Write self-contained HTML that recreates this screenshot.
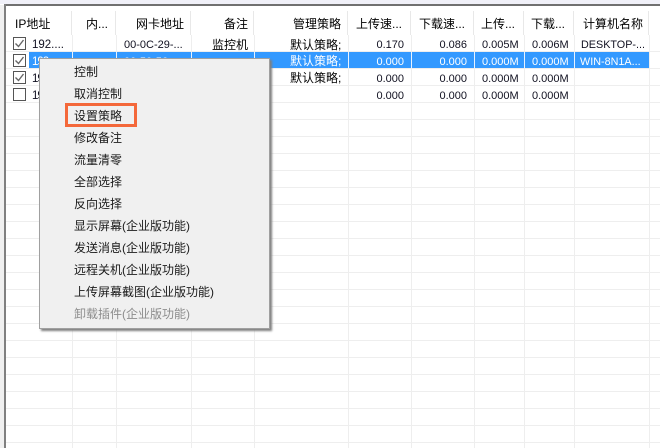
<!DOCTYPE html>
<html><head><meta charset="utf-8">
<style>
html,body{margin:0;padding:0;width:660px;height:448px;overflow:hidden;background:#fff}
body{position:relative;font-family:"Liberation Sans","Noto Sans CJK SC",sans-serif;font-size:12px;color:#000}
div,span.t{position:absolute}
.t{white-space:nowrap;line-height:17px;height:17px}
.h{top:16px}
.r{text-align:right}
.hl{left:6px;width:654px;height:1px;background:#eeeeee}
.vl{top:35px;width:1px;height:413px;background:#eeeeee}
.hs{top:11px;width:1px;height:24px;background:#e8e8e8}
.cb{left:13px;width:11px;height:11px;border:1px solid #555;background:#fff}
.cb svg{position:absolute;left:0;top:0}
.n{font-size:11px;color:#101020}
.m{position:absolute;left:74px;line-height:22px;height:22px;white-space:nowrap;color:#1a1a1a}
</style></head><body>
<div style="left:0;top:0;width:660px;height:4px;background:#f0f0f8"></div>
<div style="left:0;top:5px;width:4px;height:443px;background:#f0f0f0"></div>
<div style="left:4px;top:4px;width:656px;height:2px;background:#707070"></div>
<div style="left:4px;top:4px;width:2px;height:444px;background:#808080"></div>
<div style="left:6px;top:6px;width:654px;height:5px;background:#fff"></div>

<div class="hl" style="top:51px"></div><div class="hl" style="top:68px"></div><div class="hl" style="top:85px"></div><div class="hl" style="top:102px"></div><div class="hl" style="top:119px"></div><div class="hl" style="top:136px"></div><div class="hl" style="top:153px"></div><div class="hl" style="top:170px"></div><div class="hl" style="top:187px"></div><div class="hl" style="top:204px"></div><div class="hl" style="top:221px"></div><div class="hl" style="top:238px"></div><div class="hl" style="top:255px"></div><div class="hl" style="top:272px"></div><div class="hl" style="top:289px"></div><div class="hl" style="top:306px"></div><div class="hl" style="top:323px"></div><div class="hl" style="top:340px"></div><div class="hl" style="top:357px"></div><div class="hl" style="top:374px"></div><div class="hl" style="top:391px"></div><div class="hl" style="top:408px"></div><div class="hl" style="top:425px"></div><div class="hl" style="top:442px"></div>
<div class="vl" style="left:72px"></div><div class="vl" style="left:116px"></div><div class="vl" style="left:191px"></div><div class="vl" style="left:254px"></div><div class="vl" style="left:348px"></div><div class="vl" style="left:411px"></div><div class="vl" style="left:474px"></div><div class="vl" style="left:524px"></div><div class="vl" style="left:574px"></div><div class="vl" style="left:649px"></div>

<div style="left:6px;top:11px;width:654px;height:24px;background:#fff"></div>
<div class="hs" style="left:71px"></div><div class="hs" style="left:115px"></div><div class="hs" style="left:190px"></div><div class="hs" style="left:253px"></div><div class="hs" style="left:347px"></div><div class="hs" style="left:410px"></div><div class="hs" style="left:473px"></div><div class="hs" style="left:523px"></div><div class="hs" style="left:573px"></div><div class="hs" style="left:648px"></div>

<span class="t h" style="left:15px">IP地址</span>
<span class="t h" style="left:86px">内...</span>
<span class="t h" style="left:136px">网卡地址</span>
<span class="t h" style="left:224px">备注</span>
<span class="t h" style="left:293px">管理策略</span>
<span class="t h" style="left:356px">上传速...</span>
<span class="t h" style="left:419px">下载速...</span>
<span class="t h" style="left:481px">上传...</span>
<span class="t h" style="left:531px">下载...</span>
<span class="t h" style="left:583px">计算机名称</span>

<div style="left:29px;top:52px;width:620px;height:16px;background:#3399ff"></div>
<div style="left:72px;top:52px;width:1px;height:16px;background:#e8f2ff"></div><div style="left:116px;top:52px;width:1px;height:16px;background:#e8f2ff"></div><div style="left:191px;top:52px;width:1px;height:16px;background:#e8f2ff"></div><div style="left:254px;top:52px;width:1px;height:16px;background:#e8f2ff"></div><div style="left:348px;top:52px;width:1px;height:16px;background:#e8f2ff"></div><div style="left:411px;top:52px;width:1px;height:16px;background:#e8f2ff"></div><div style="left:474px;top:52px;width:1px;height:16px;background:#e8f2ff"></div><div style="left:524px;top:52px;width:1px;height:16px;background:#e8f2ff"></div><div style="left:574px;top:52px;width:1px;height:16px;background:#e8f2ff"></div>

<div class="cb" style="top:37px"><svg width="11" height="11"><path d="M1.5 5.5L4.5 8.5L9.5 2" fill="none" stroke="#666" stroke-width="1.4"/></svg></div>
<div class="cb" style="top:54px"><svg width="11" height="11"><path d="M1.5 5.5L4.5 8.5L9.5 2" fill="none" stroke="#666" stroke-width="1.4"/></svg></div>
<div class="cb" style="top:71px"><svg width="11" height="11"><path d="M1.5 5.5L4.5 8.5L9.5 2" fill="none" stroke="#666" stroke-width="1.4"/></svg></div>
<div class="cb" style="top:88px"></div>

<span class="t n" style="left:32px;top:37px;font-size:11.5px">192....</span>
<span class="t n" style="left:32px;top:54px;color:#fff;letter-spacing:-1px;font-size:11.5px">192</span>
<span class="t n" style="left:32px;top:71px;letter-spacing:-1px;font-size:11.5px">192</span>
<span class="t n" style="left:32px;top:88px;letter-spacing:-1px;font-size:11.5px">192</span>
<span class="t n" style="left:124px;top:37px">00-0C-29-...</span>
<span class="t n" style="left:124px;top:54px;color:#fff">00-50-56-...</span>
<span class="t" style="left:212px;top:37px">监控机</span>
<span class="t" style="left:290px;top:37px">默认策略;</span>
<span class="t" style="left:290px;top:53px;color:#fff">默认策略;</span>
<span class="t" style="left:290px;top:70px">默认策略;</span>

<span class="t n r" style="left:340px;width:64px;top:37px">0.170</span>
<span class="t n r" style="left:403px;width:64px;top:37px">0.086</span>
<span class="t n" style="left:482px;top:37px">0.005M</span>
<span class="t n" style="left:532px;top:37px">0.006M</span>
<span class="t n" style="left:581px;top:37px;font-size:10.8px">DESKTOP-...</span>

<span class="t n r" style="left:340px;width:64px;top:54px;color:#fff">0.000</span>
<span class="t n r" style="left:403px;width:64px;top:54px;color:#fff">0.000</span>
<span class="t n" style="left:482px;top:54px;color:#fff">0.000M</span>
<span class="t n" style="left:532px;top:54px;color:#fff">0.000M</span>
<span class="t n" style="left:580px;top:54px;color:#fff;font-size:10.8px">WIN-8N1A...</span>

<span class="t n r" style="left:340px;width:64px;top:71px">0.000</span>
<span class="t n r" style="left:403px;width:64px;top:71px">0.000</span>
<span class="t n" style="left:482px;top:71px">0.000M</span>
<span class="t n" style="left:532px;top:71px">0.000M</span>

<span class="t n r" style="left:340px;width:64px;top:88px">0.000</span>
<span class="t n r" style="left:403px;width:64px;top:88px">0.000</span>
<span class="t n" style="left:482px;top:88px">0.000M</span>
<span class="t n" style="left:532px;top:88px">0.000M</span>

<div style="left:39px;top:58px;width:229px;height:269px;background:#f0f0f0;border:1px solid #a0a0a0;box-shadow:2px 2px 2px #808080"></div>
<span class="m" style="top:61px">控制</span>
<span class="m" style="top:83px">取消控制</span>
<span class="m" style="top:105px">设置策略</span>
<span class="m" style="top:127px">修改备注</span>
<span class="m" style="top:149px">流量清零</span>
<span class="m" style="top:171px">全部选择</span>
<span class="m" style="top:193px">反向选择</span>
<span class="m" style="top:215px">显示屏幕(企业版功能)</span>
<span class="m" style="top:237px">发送消息(企业版功能)</span>
<span class="m" style="top:259px">远程关机(企业版功能)</span>
<span class="m" style="top:281px">上传屏幕截图(企业版功能)</span>
<span class="m" style="top:303px;color:#8c8c8c">卸载插件(企业版功能)</span>
<div style="left:65px;top:103px;width:66px;height:18px;border:3px solid #f4683a"></div>
</body></html>
